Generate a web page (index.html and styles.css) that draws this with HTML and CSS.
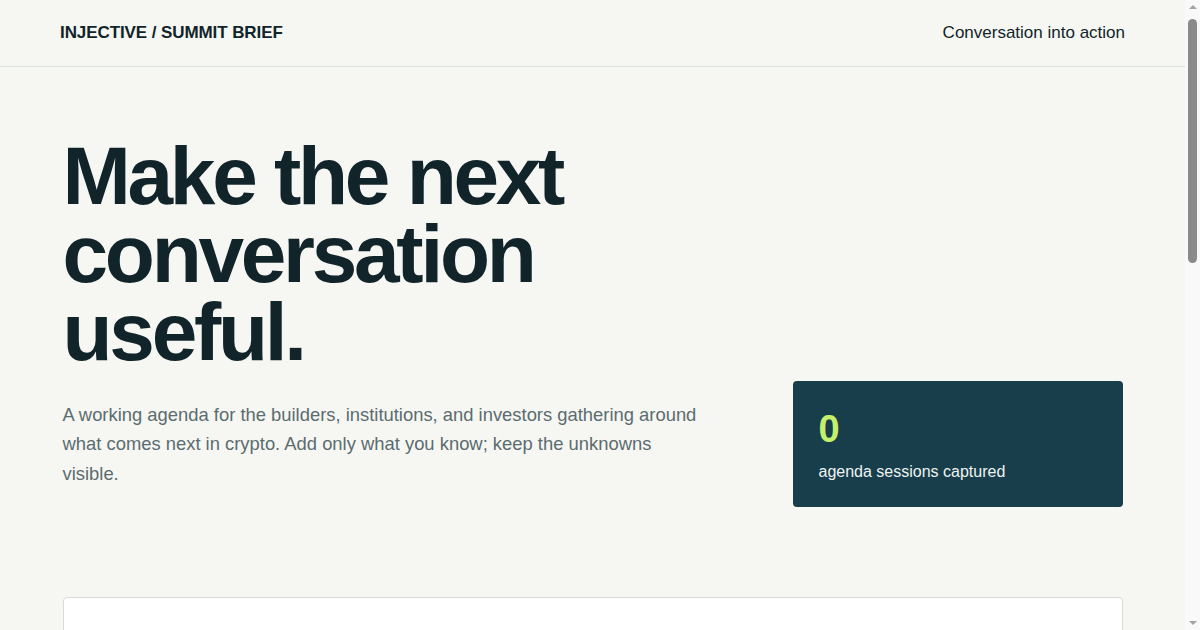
FILE: index.html
```html
<!DOCTYPE html>
<html lang="en">
<head>
<meta charset="utf-8">
<title>Injective Summit Brief</title>
<link rel="stylesheet" href="styles.css">
</head>
<body>
<div class="page">
  <header class="topbar">
    <div class="brand">INJECTIVE / SUMMIT BRIEF</div>
    <div class="tagline">Conversation into action</div>
  </header>
  <main class="wrap">
    <section class="hero">
      <div class="hero-text">
        <h1 class="headline">Make the next conversation useful.</h1>
        <p class="lede">A working agenda for the builders, institutions, and investors gathering around what comes next in crypto. Add only what you know; keep the unknowns visible.</p>
      </div>
      <div class="stat-card">
        <div class="stat-num">0</div>
        <div class="stat-label">agenda sessions captured</div>
      </div>
    </section>
    <section class="panel"></section>
  </main>
</div>
<div class="scrollbar" aria-hidden="true">
  <span class="sb-up"></span>
  <span class="sb-thumb"></span>
  <span class="sb-down"></span>
</div>
</body>
</html>
```
FILE: styles.css
```css
* { box-sizing: border-box; }
html, body { margin: 0; padding: 0; }
body {
  background: #f6f7f2;
  color: #11242a;
  font-family: "Liberation Sans", Arial, sans-serif;
}
.page {
  margin-right: 15px;
}
.topbar {
  height: 67px;
  padding: 0 60px;
  display: flex;
  align-items: center;
  justify-content: space-between;
  border-bottom: 1px solid #d9e3db;
}
.brand {
  font-size: 17px;
  font-weight: 700;
  letter-spacing: -0.005em;
  color: #11242a;
}
.tagline {
  font-size: 17px;
  color: #11242a;
}
.wrap {
  max-width: 1060px;
  margin: 0 auto;
  padding-bottom: 110px;
}
.hero {
  display: grid;
  grid-template-columns: 1fr 330px;
  gap: 60px;
  padding-top: 70px;
  padding-bottom: 90px;
}
.headline {
  margin: 0;
  font-size: 82px;
  line-height: 0.95;
  font-weight: 700;
  letter-spacing: -0.04em;
  color: #11242a;
  max-width: 640px;
}
.lede {
  margin: 29px 0 18.5px;
  max-width: 648px;
  font-size: 18.4px;
  line-height: 1.61;
  color: #5b6c70;
}
.stat-card {
  align-self: end;
  background: #173e4a;
  border-radius: 4px;
  padding: 29px 26px 23px;
  color: #ffffff;
}
.stat-num {
  font-size: 38px;
  line-height: 1;
  font-weight: 700;
  color: #c6ef6c;
}
.stat-label {
  margin-top: 12px;
  font-size: 16px;
  line-height: 1.5;
  color: #eef3f3;
}
.panel {
  height: 880px;
  background: #ffffff;
  border: 1px solid #d9dcd6;
  border-radius: 4px;
}
.scrollbar {
  position: fixed;
  top: 0;
  right: 0;
  width: 15px;
  height: 100vh;
  background: #f9f9f9;
  display: flex;
  flex-direction: column;
  align-items: center;
}
.sb-up, .sb-down {
  width: 0;
  height: 0;
  border-left: 4px solid transparent;
  border-right: 4px solid transparent;
  margin: 5px 0;
}
.sb-up { border-bottom: 4px solid #a3a3a3; }
.sb-down { border-top: 4px solid #a3a3a3; margin-top: auto; }
.sb-thumb {
  width: 9px;
  height: 244px;
  margin-top: 5px;
  background: #8a8a8a;
  border-radius: 5px;
}
```
